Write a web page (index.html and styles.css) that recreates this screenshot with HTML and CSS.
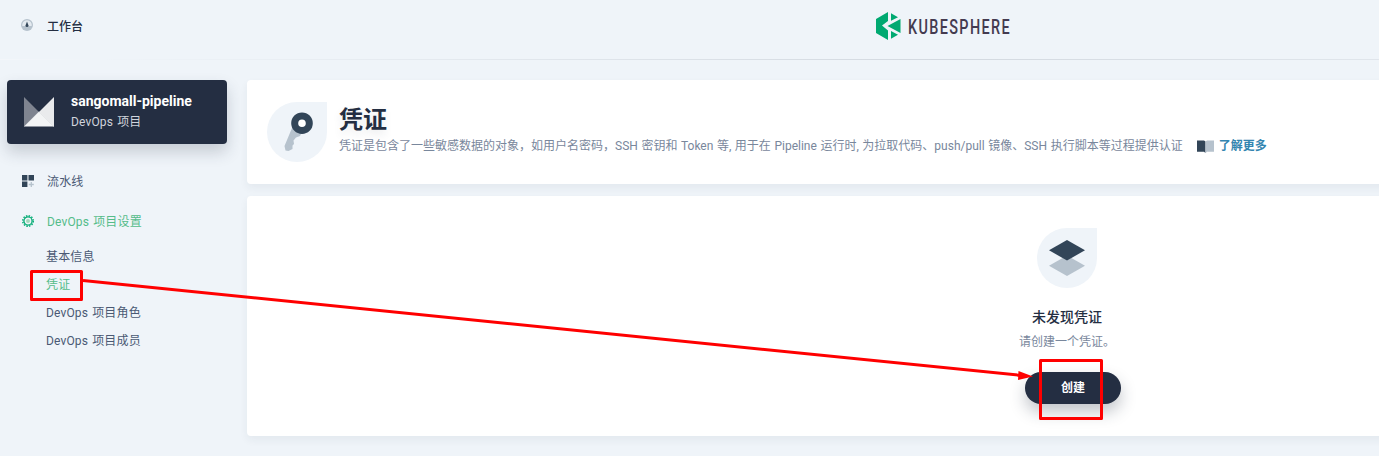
FILE: index.html
```html
<!DOCTYPE html>
<html lang="zh-CN">
<head>
<meta charset="utf-8">
<title>KubeSphere</title>
<link rel="stylesheet" href="styles.css">
</head>
<body>
<div class="page">
  <header class="header">
    <div class="workbench">
      <svg class="icon-dash" width="12" height="12" viewBox="0 0 12 12"><circle cx="6" cy="6" r="6" fill="#b6c2cd"/><path d="M1.3 7A4.8 4.8 0 1 1 10.700 7Z" fill="#e4eaf0"/><path d="M6 2.500L7.500 6.500A1.500 1.500 0 1 1 4.500 6.500Z" fill="#324558"/></svg>
      <span>工作台</span>
    </div>
    <svg class="logo" width="136" height="30" viewBox="0 0 136 30">
      <path d="M0 8L12 1V10L6 14.500L12 19.500V29L0 22Z" fill="#00a971"/>
      <path d="M15 2.200L22 6.200L15 9.800ZM24.500 8V22L11.500 15ZM15 20L22 23.800L15 27.800Z" fill="#00a971"/>
      <text class="wordmark" x="32" y="22.500" textLength="103" lengthAdjust="spacingAndGlyphs">KUBESPHERE</text>
    </svg>
  </header>
  <div class="body">
    <aside class="sidebar">
      <div class="project">
        <svg width="30" height="30" viewBox="0 0 30 30"><path d="M0 0L15 15L0 30Z" fill="#7f8490"/><path d="M30 0V30L15 15Z" fill="#e9eaec"/><path d="M0 29.500L15 14.500L30 29.500Z" fill="#f3f4f5"/></svg>
        <div>
          <div class="project-name">sangomall-pipeline</div>
          <div class="project-type">DevOps 项目</div>
        </div>
      </div>
      <nav class="nav">
        <div class="item">
          <svg width="12" height="12" viewBox="0 0 12 12"><path d="M0 0H5.400V5.400H0ZM6.500 0H12V5.400H6.500ZM0 6.500H5.400V12H0Z" fill="#324558"/><path d="M9.300 7V12M6.800 9.500H11.800" stroke="#b6c2cd" stroke-width="1.300"/></svg>
          <span>流水线</span>
        </div>
        <div class="item active">
          <svg width="12" height="12" viewBox="0 0 12 12"><circle cx="6" cy="6" r="5.300" fill="none" stroke="#00aa72" stroke-width="1.400" stroke-dasharray="1.500 1.275"/><circle cx="6" cy="6" r="4.100" fill="#eff4f9" stroke="#00aa72" stroke-width="1.300"/><circle cx="6" cy="6" r="2" fill="#a2d8bb"/></svg>
          <span>DevOps 项目设置</span>
        </div>
        <div class="subnav">
          <div>基本信息</div>
          <div class="active">凭证</div>
          <div>DevOps 项目角色</div>
          <div>DevOps 项目成员</div>
        </div>
      </nav>
    </aside>
    <main class="main">
      <section class="card banner">
        <div class="leaf">
          <svg width="60" height="60" viewBox="0 0 60 60"><path d="M25 26L17.500 44L18.500 48.500L21.500 49L25.500 47V43.500L27 42L26.500 38.500L29 35.500L33 34L35 30Z" fill="#b6c2cd"/><circle cx="35" cy="21.200" r="7.300" fill="#fff" stroke="#324558" stroke-width="7"/></svg>
        </div>
        <div class="banner-text">
          <h1>凭证</h1>
          <p><span class="desc">凭证是包含了一些敏感数据的对象，如用户名密码，SSH 密钥和 Token 等, 用于在 Pipeline 运行时, 为拉取代码、push/pull 镜像、SSH 执行脚本等过程提供认证</span><svg class="book" width="17" height="13" viewBox="0 0 17 13"><path d="M0 .5H7L8.500 1.500V13L7 11.800H0Z" fill="#324558"/><path d="M8.500 1.500L10 .5H17V11.800H10L8.500 13Z" fill="#b6c2cd"/></svg><a>了解更多</a></p>
        </div>
      </section>
      <section class="card empty">
        <div class="leaf">
          <svg width="60" height="60" viewBox="0 0 60 60"><path d="M30 27.500L48 37.700L30 48L12 37.700Z" fill="#b6c2cd"/><path d="M30 12L48 22.300L30 32.500L12 22.300Z" fill="#324558"/></svg>
        </div>
        <h2>未发现凭证</h2>
        <p>请创建一个凭证。</p>
        <button class="create">创建</button>
      </section>
    </main>
  </div>
</div>
<svg class="annotation" width="1379" height="456" viewBox="0 0 1379 456">
  <g fill="none" stroke="#f00" stroke-width="3" stroke-linejoin="round"><rect x="31.500" y="271.500" width="50" height="28"/><rect x="1040.500" y="360.500" width="61" height="58"/><path d="M83 280.500L1022 375.500"/></g>
  <path d="M1033 376.500L1018.500 371L1018 380Z" fill="#f00"/>
</svg>
</body>
</html>
```
FILE: styles.css
```css
* { box-sizing: border-box; }
body {
  margin: 0;
  height: 456px;
  overflow: hidden;
  background: #eff4f9;
  color: #242e42;
  font-family: Roboto, "Noto Sans CJK SC", sans-serif;
  font-size: 12px;
  line-height: 20px;
}
svg { display: block; flex: none; }
h1, h2, p { margin: 0; }
.page { width: 1887px; }
.header {
  display: grid;
  grid-template-columns: 1fr auto 1fr;
  height: 60px;
  padding-top: 11px;
  background: linear-gradient(to right, #f3f6fa, #eff4f9 5%, #d3d9e0 50%, #eff4f9) bottom / 100% 1px no-repeat;
}
.workbench {
  display: flex;
  gap: 14px;
  padding: 6px 0 0 21px;
  font-weight: 500;
}
.icon-dash { margin-top: 2px; }
.logo { overflow: visible; }
.wordmark {
  font-family: Roboto, sans-serif;
  font-size: 21px;
  font-weight: 500;
  letter-spacing: 2px;
  fill: #443b50;
}
.body { display: flex; gap: 20px; padding: 20px 0 0 7px; }
.sidebar { width: 220px; flex: none; }
.project {
  display: flex;
  align-items: center;
  gap: 17px;
  height: 64px;
  padding-left: 17px;
  border-radius: 4px;
  background: #242e42;
  box-shadow: 0 8px 16px rgba(36, 46, 66, .2);
}
.project-name { padding-bottom: 1px; margin-top: -1px; font-size: 14px; font-weight: 700; color: #fff; }
.project-type { color: #d0d4dc; letter-spacing: .15px; word-spacing: 1px; }
.nav { padding-top: 17px; color: #4a5974; letter-spacing: .15px; word-spacing: 1px; }
.item { display: flex; align-items: center; gap: 13px; height: 40px; padding-left: 15px; }
.item span { margin-top: 1px; }
.active { color: #55bc8a; }
.subnav { padding: 2px 0 0 39px; line-height: 28px; }
.main { display: grid; gap: 12px; width: 1640px; flex: none; }
.card {
  background: #fff;
  border-radius: 4px;
  box-shadow: 0 4px 8px rgba(36, 46, 66, .06);
}
.banner { display: flex; gap: 12px; height: 104px; padding: 22px 20px; }
.leaf { width: 60px; height: 60px; border-radius: 50% 0 50% 50%; background: #eff4f9; }
.banner-text { padding-top: 2px; }
.banner-text h1 {
  font-size: 24px;
  line-height: 32px;
  font-weight: 700;
  text-shadow: 0 4px 8px rgba(36, 46, 66, .1);
}
.banner-text p { display: flex; align-items: center; color: #79879c; white-space: nowrap; }
.desc { word-spacing: .6px; }
.book { margin: 1px 5px 0 14px; }
.banner-text a { color: #3385b0; font-weight: 700; }
.empty {
  display: flex;
  flex-direction: column;
  align-items: center;
  height: 240px;
  padding-top: 32px;
}
.empty h2 { margin-top: 17px; font-size: 14px; line-height: 24px; font-weight: 500; }
.empty p { margin-top: 3px; color: #79879c; }
.create {
  width: 96px;
  height: 32px;
  margin: 20px 0 0 12px;
  padding: 0;
  border: 0;
  border-radius: 16px;
  background: #242e42;
  color: #fff;
  font: 700 12px/20px Roboto, "Noto Sans CJK SC", sans-serif;
  box-shadow: 0 8px 16px rgba(36, 46, 66, .28);
}
.annotation { position: absolute; top: 0; left: 0; }
```
